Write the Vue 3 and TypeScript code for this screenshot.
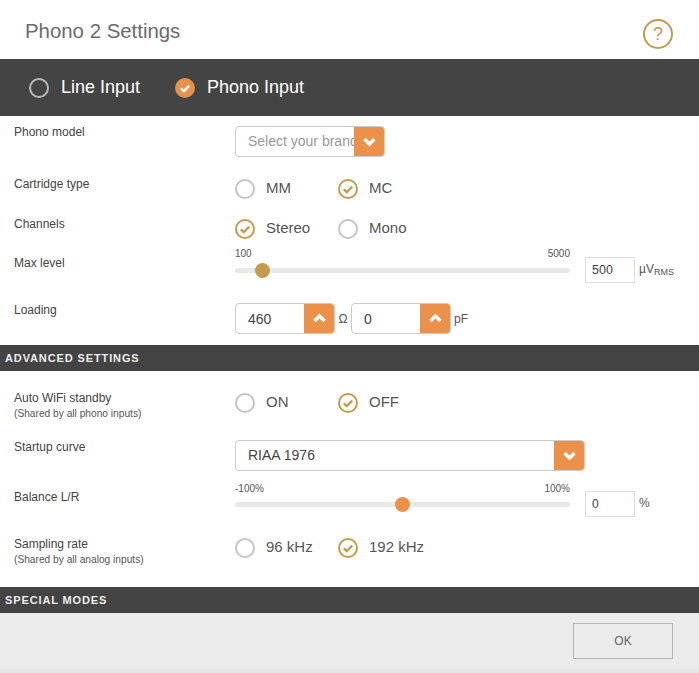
<script setup lang="ts">
import { ref } from "vue";

const input = ref("Phono Input");
const cartridge = ref("MC");
const channels = ref("Stereo");
const wifi = ref("OFF");
const sampling = ref("192 kHz");

const maxLevel = ref("500");
const balance = ref("0");
const loadR = ref("460");
const loadC = ref("0");

// slider position in percent of the track
const pct = (value: string, min: number, max: number) =>
  ((Number(value) - min) / (max - min)) * 100;
</script>

<template>
  <div class="page">
    <header class="title-bar">
      <h1>Phono 2 Settings</h1>
      <div class="help">?</div>
    </header>

    <div class="input-bar">
      <label
        v-for="name in ['Line Input', 'Phono Input']"
        :key="name"
        class="input-opt"
        @click="input = name"
      >
        <span class="radio" :class="{ filled: input === name }">
          <svg v-if="input === name" viewBox="0 0 20 20">
            <path d="M5.8 10.4l3 2.8 5.4-5.6" />
          </svg>
        </span>
        {{ name }}
      </label>
    </div>

    <section class="rows">
      <div class="row h50">
        <div class="name mt2">Phono model</div>
        <div class="select w150 mt4">
          <span class="placeholder">Select your brand</span>
          <span class="btn">
            <svg viewBox="0 0 31 31"><path d="M10.5 13l5 5 5-5" /></svg>
          </span>
        </div>
      </div>

      <div class="row h40">
        <div class="name mt4">Cartridge type</div>
        <div class="radios mt6">
          <label v-for="o in ['MM', 'MC']" :key="o" class="opt" @click="cartridge = o">
            <span class="radio" :class="{ on: cartridge === o }">
              <svg v-if="cartridge === o" viewBox="0 0 20 20"><path d="M5.8 10.4l3 2.8 5.4-5.6" /></svg>
            </span>
            <span class="opt-text">{{ o }}</span>
          </label>
        </div>
      </div>

      <div class="row h36">
        <div class="name mt4">Channels</div>
        <div class="radios mt6">
          <label v-for="o in ['Stereo', 'Mono']" :key="o" class="opt" @click="channels = o">
            <span class="radio" :class="{ on: channels === o }">
              <svg v-if="channels === o" viewBox="0 0 20 20"><path d="M5.8 10.4l3 2.8 5.4-5.6" /></svg>
            </span>
            <span class="opt-text">{{ o }}</span>
          </label>
        </div>
      </div>

      <div class="row h50">
        <div class="name mt7">Max level</div>
        <div class="slider-line">
          <div class="slider">
            <div class="scale"><span>100</span><span>5000</span></div>
            <div class="track">
              <span class="thumb gold" :style="{ left: pct(maxLevel, 100, 5000) + '%' }"></span>
            </div>
          </div>
          <input v-model="maxLevel" class="value big" />
          <span class="unit">µV<sub>RMS</sub></span>
        </div>
      </div>

      <div class="row h47">
        <div class="name mt4">Loading</div>
        <div class="loading">
          <div class="select w100">
            <input v-model="loadR" class="inner" />
            <span class="btn">
              <svg viewBox="0 0 31 31"><path d="M10.5 18l5-5 5 5" /></svg>
            </span>
          </div>
          <span class="sym">Ω</span>
          <div class="select w100">
            <input v-model="loadC" class="inner" />
            <span class="btn">
              <svg viewBox="0 0 31 31"><path d="M10.5 18l5-5 5 5" /></svg>
            </span>
          </div>
          <span class="sym pf">pF</span>
        </div>
      </div>
    </section>

    <h2 class="band">ADVANCED SETTINGS</h2>

    <section>
      <div class="row h62">
        <div class="mt19">
          <div class="name">Auto WiFi standby</div>
          <div class="sub">(Shared by all phono inputs)</div>
        </div>
        <div class="radios mt21">
          <label v-for="o in ['ON', 'OFF']" :key="o" class="opt" @click="wifi = o">
            <span class="radio" :class="{ on: wifi === o }">
              <svg v-if="wifi === o" viewBox="0 0 20 20"><path d="M5.8 10.4l3 2.8 5.4-5.6" /></svg>
            </span>
            <span class="opt-text">{{ o }}</span>
          </label>
        </div>
      </div>

      <div class="row h47">
        <div class="name mt6">Startup curve</div>
        <div class="select w350 mt7">
          <span class="text">RIAA 1976</span>
          <span class="btn">
            <svg viewBox="0 0 31 31"><path d="M10.5 13l5 5 5-5" /></svg>
          </span>
        </div>
      </div>

      <div class="row h52">
        <div class="name mt9">Balance L/R</div>
        <div class="slider-line tight">
          <div class="slider">
            <div class="scale"><span>-100%</span><span>100%</span></div>
            <div class="track">
              <span class="thumb" :style="{ left: pct(balance, -100, 100) + '%' }"></span>
            </div>
          </div>
          <input v-model="balance" class="value" />
          <span class="unit">%</span>
        </div>
      </div>

      <div class="row h55">
        <div class="mt4">
          <div class="name">Sampling rate</div>
          <div class="sub">(Shared by all analog inputs)</div>
        </div>
        <div class="radios mt5">
          <label v-for="o in ['96 kHz', '192 kHz']" :key="o" class="opt" @click="sampling = o">
            <span class="radio" :class="{ on: sampling === o }">
              <svg v-if="sampling === o" viewBox="0 0 20 20"><path d="M5.8 10.4l3 2.8 5.4-5.6" /></svg>
            </span>
            <span class="opt-text">{{ o }}</span>
          </label>
        </div>
      </div>
    </section>

    <h2 class="band">SPECIAL MODES</h2>

    <footer class="footer">
      <button class="ok">OK</button>
    </footer>
  </div>
</template>

<style scoped>
.page {
  width: 699px;
  height: 673px;
  overflow: hidden;
  background: #fff;
  font-family: "Liberation Sans", Arial, sans-serif;
  color: #444;
}

.title-bar {
  height: 59px;
  display: flex;
  justify-content: space-between;
  align-items: center;
  padding: 9px 26px 0 25px;
  box-sizing: border-box;
}
h1 {
  margin: 0 0 5px;
  font-size: 20.4px;
  font-weight: normal;
  color: #6b6b6b;
}
.help {
  width: 30px;
  height: 30px;
  box-sizing: border-box;
  border: 2px solid #c49a4f;
  border-radius: 50%;
  color: #c49a4f;
  font-size: 18px;
  line-height: 26px;
  text-align: center;
  margin-bottom: 1px;
}

.input-bar {
  height: 57px;
  background: #444;
  display: flex;
  align-items: center;
  padding-left: 29px;
}
.input-opt {
  width: 146px;
  display: flex;
  align-items: center;
  gap: 12px;
  color: #fff;
  font-size: 18px;
}
.input-opt .radio {
  border-color: #bbb;
}

.rows {
  padding-top: 6px;
}
.row {
  display: grid;
  grid-template-columns: 221px 1fr;
  align-items: start;
  padding-left: 14px;
}
.h36 { height: 36px; }
.h40 { height: 40px; }
.h47 { height: 47px; }
.h50 { height: 50px; }
.h52 { height: 52px; }
.h55 { height: 55px; }
.h62 { height: 62px; }
.mt2 { margin-top: 2px; }
.mt4 { margin-top: 4px; }
.mt5 { margin-top: 5px; }
.mt6 { margin-top: 6px; }
.mt7 { margin-top: 7px; }
.mt9 { margin-top: 9px; }
.mt19 { margin-top: 19px; }
.mt21 { margin-top: 21px; }

.name {
  font-size: 12px;
  line-height: 16px;
  color: #444;
}
.sub {
  font-size: 10.2px;
  line-height: 16px;
  color: #555;
}

.radios {
  display: flex;
}
.opt {
  width: 103px;
  display: flex;
  align-items: center;
  gap: 11px;
  font-size: 15px;
  line-height: 20px;
  color: #555;
  white-space: nowrap;
}
.opt-text {
  margin-bottom: 2px;
}
.radio {
  flex: none;
  width: 20px;
  height: 20px;
  box-sizing: border-box;
  border: 2px solid #c4c4c4;
  border-radius: 50%;
  position: relative;
}
.radio svg {
  position: absolute;
  left: -2px;
  top: -2px;
  width: 20px;
  height: 20px;
  fill: none;
  stroke: #c49a4f;
  stroke-width: 2.3;
}
.radio.on {
  border-color: #c49a4f;
}
.input-opt .radio.filled {
  background: #ec8f49;
  border-color: #d9964c;
}
.radio.filled svg {
  stroke: #fff;
  stroke-width: 2.4;
}

.select {
  height: 31px;
  box-sizing: border-box;
  border: 1px solid #ccc;
  border-radius: 4px;
  display: flex;
  align-items: center;
  position: relative;
  overflow: hidden;
  font-size: 14px;
  flex: none;
}
.w100 { width: 100px; }
.w150 { width: 150px; }
.w350 { width: 350px; }
.placeholder,
.text,
.inner {
  flex: 1;
  min-width: 0;
  padding-left: 12px;
  white-space: nowrap;
  overflow: hidden;
}
.placeholder,
.text {
  margin-bottom: 2px;
}
.placeholder {
  color: #999;
}
.text {
  color: #444;
}
.inner {
  border: 0;
  outline: 0;
  height: 100%;
  box-sizing: border-box;
  font: inherit;
  color: #444;
  background: transparent;
}
.btn {
  flex: none;
  width: 31px;
  height: 31px;
  margin-right: -1px;
  background: #ec914a;
}
.btn svg {
  display: block;
  width: 31px;
  height: 31px;
  fill: none;
  stroke: #fff;
  stroke-width: 3.4;
}

.slider-line {
  display: flex;
  align-items: flex-start;
}
.slider-line.tight {
  margin-top: 2px;
}
.tight .scale {
  margin-top: 1px;
}
.tight .track {
  margin-top: 7px;
}
.slider {
  width: 335px;
  flex: none;
}
.scale {
  display: flex;
  justify-content: space-between;
  font-size: 10px;
  line-height: 12px;
  color: #555;
}
.track {
  position: relative;
  height: 5px;
  margin-top: 8px;
  background: #e8e8e8;
  border-radius: 3px;
}
.thumb {
  position: absolute;
  top: -5px;
  width: 15px;
  height: 15px;
  margin-left: -7.5px;
  border-radius: 50%;
  background: #ec914a;
}
.thumb.gold {
  background: #c49a4f;
}
.value {
  width: 50px;
  height: 26px;
  box-sizing: border-box;
  margin: 9px 0 0 15px;
  padding: 0 0 0 6px;
  border: 1px solid #ddd;
  outline: 0;
  font: 12px "Liberation Sans", Arial, sans-serif;
  color: #444;
}
.value.big {
  font-size: 12.5px;
}
.unit {
  margin: 12px 0 0 4px;
  font-size: 12px;
  line-height: 18px;
  color: #555;
}
.unit sub {
  font-size: 9px;
  vertical-align: -2px;
  line-height: 0;
}

.loading {
  display: flex;
  align-items: center;
  margin-top: 5px;
}
.sym {
  width: 16px;
  text-align: center;
  font-size: 12px;
  color: #555;
}
.sym.pf {
  width: auto;
  margin-left: 3px;
}

.band {
  margin: 0;
  height: 26px;
  padding-left: 5px;
  background: #444;
  color: #eee;
  font-size: 11px;
  line-height: 26px;
  font-weight: bold;
  letter-spacing: 0.88px;
}

.footer {
  height: 60px;
  box-sizing: border-box;
  background: #ebebeb;
  border-bottom: 4px solid #e5e5e5;
  padding: 10px 26px 0 0;
  display: flex;
  justify-content: flex-end;
  align-items: flex-start;
}
.ok {
  width: 100px;
  height: 36px;
  border: 1px solid #b5b5b5;
  background: #ebebeb;
  color: #666;
  font: 12px "Liberation Sans", Arial, sans-serif;
}
</style>

<style>
html,
body {
  margin: 0;
  background: #fff;
}
</style>
